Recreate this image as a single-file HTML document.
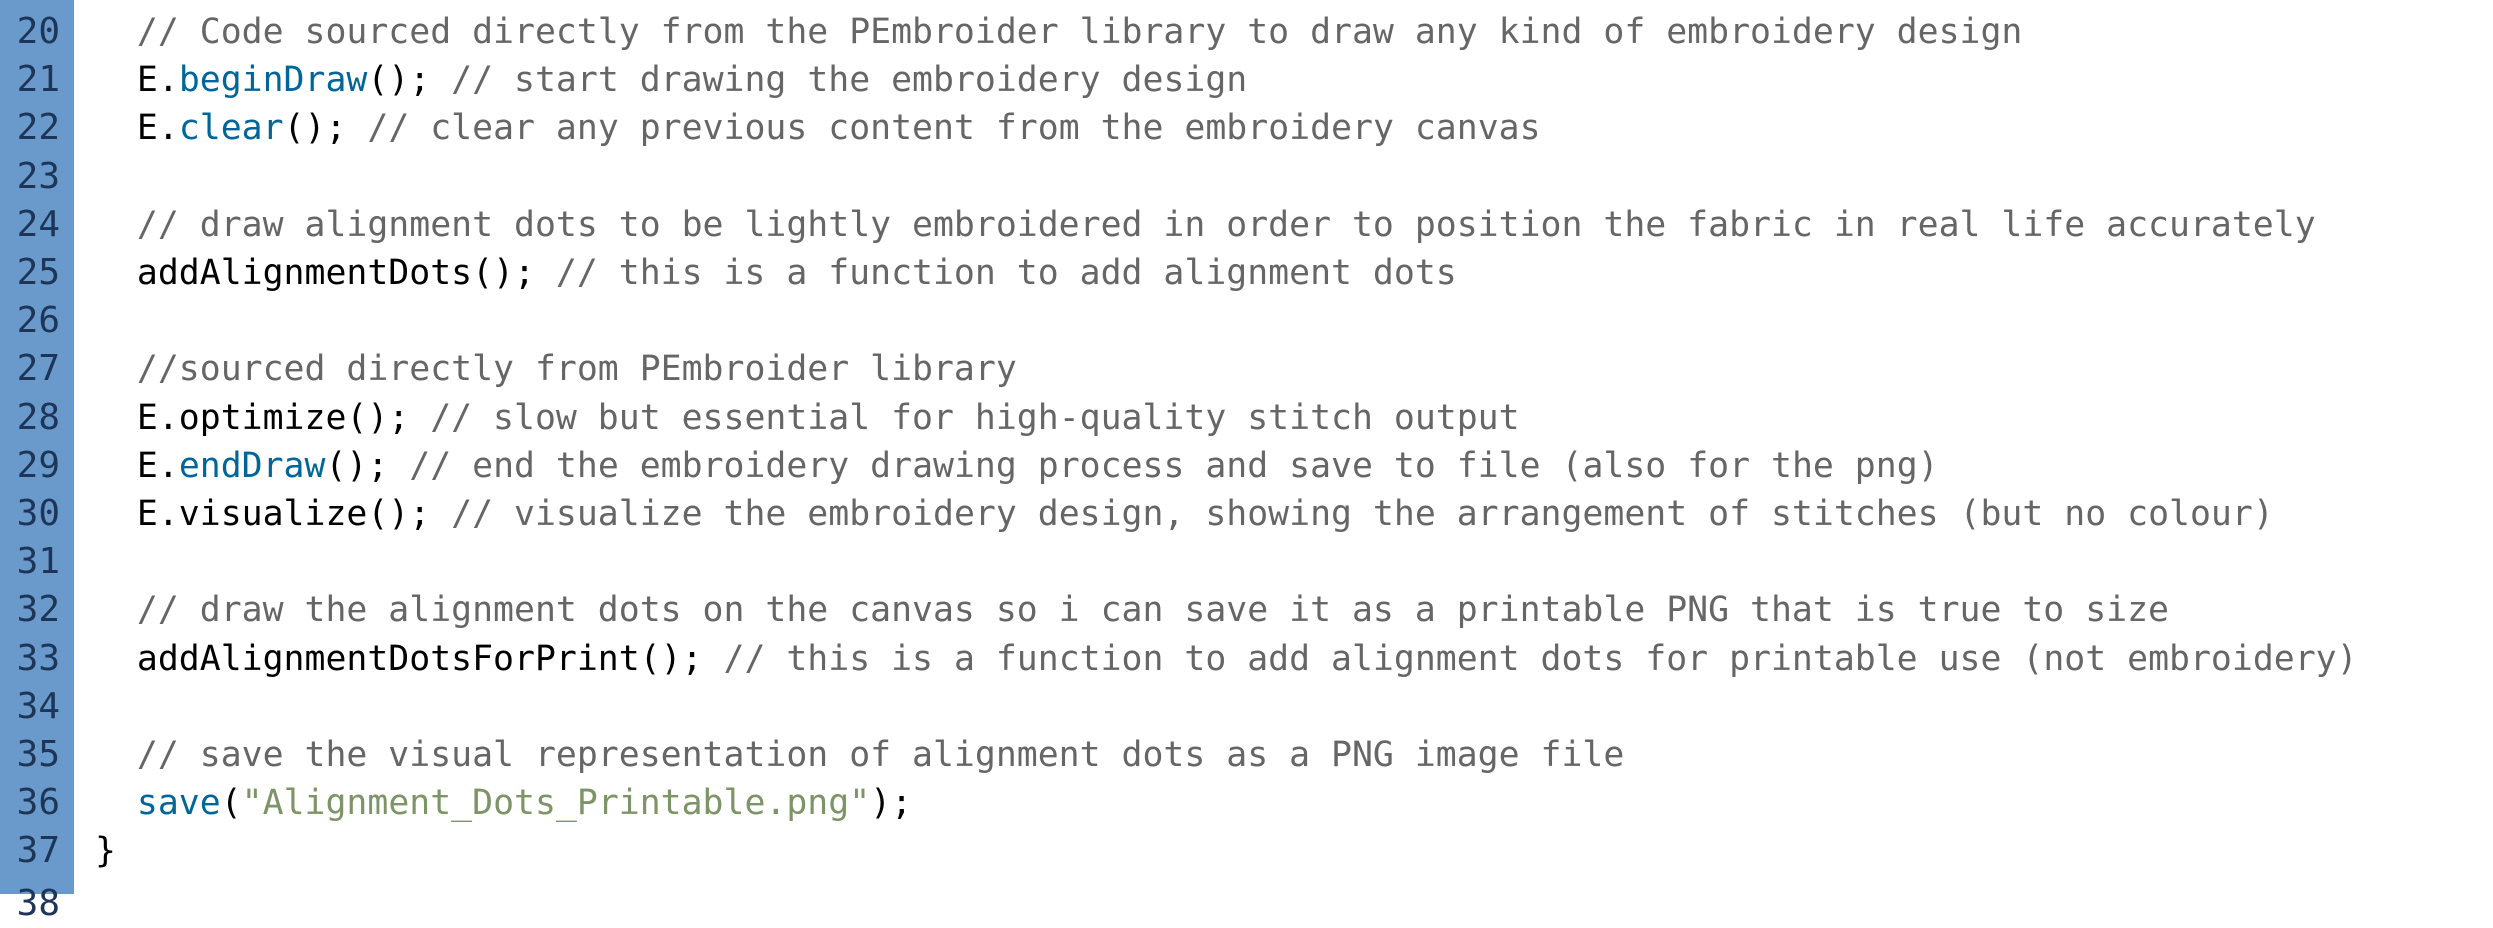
<!DOCTYPE html>
<html><head><style>
html,body{margin:0;padding:0;width:2493px;height:894px;overflow:hidden;background:#fff;}
.g{position:absolute;left:0;top:0;width:74px;height:894px;background:#6a9acb;}
.l{position:absolute;left:0;height:48.2px;line-height:48.2px;font-family:"DejaVu Sans Mono","Liberation Mono",monospace;font-size:34.8px;white-space:pre;color:#000;}
.n{position:absolute;left:0;width:60px;text-align:right;color:#1d3557;font-size:36px;}
.t{position:absolute;left:95px;}
.c{color:#666;}
.f{color:#006699;}
.s{color:#7d9467;}
</style></head><body>
<div class="g"></div>
<div class="l" style="top:8px"><span class="n">20</span><span class="t">  <span class="c">// Code sourced directly from the PEmbroider library to draw any kind of embroidery design</span></span></div>
<div class="l" style="top:56.2px"><span class="n">21</span><span class="t">  E.<span class="f">beginDraw</span>(); <span class="c">// start drawing the embroidery design</span></span></div>
<div class="l" style="top:104.4px"><span class="n">22</span><span class="t">  E.<span class="f">clear</span>(); <span class="c">// clear any previous content from the embroidery canvas</span></span></div>
<div class="l" style="top:152.6px"><span class="n">23</span></div>
<div class="l" style="top:200.8px"><span class="n">24</span><span class="t">  <span class="c">// draw alignment dots to be lightly embroidered in order to position the fabric in real life accurately</span></span></div>
<div class="l" style="top:249px"><span class="n">25</span><span class="t">  addAlignmentDots(); <span class="c">// this is a function to add alignment dots</span></span></div>
<div class="l" style="top:297.2px"><span class="n">26</span></div>
<div class="l" style="top:345.4px"><span class="n">27</span><span class="t">  <span class="c">//sourced directly from PEmbroider library</span></span></div>
<div class="l" style="top:393.6px"><span class="n">28</span><span class="t">  E.optimize(); <span class="c">// slow but essential for high-quality stitch output</span></span></div>
<div class="l" style="top:441.8px"><span class="n">29</span><span class="t">  E.<span class="f">endDraw</span>(); <span class="c">// end the embroidery drawing process and save to file (also for the png)</span></span></div>
<div class="l" style="top:490px"><span class="n">30</span><span class="t">  E.visualize(); <span class="c">// visualize the embroidery design, showing the arrangement of stitches (but no colour)</span></span></div>
<div class="l" style="top:538.2px"><span class="n">31</span></div>
<div class="l" style="top:586.4px"><span class="n">32</span><span class="t">  <span class="c">// draw the alignment dots on the canvas so i can save it as a printable PNG that is true to size</span></span></div>
<div class="l" style="top:634.6px"><span class="n">33</span><span class="t">  addAlignmentDotsForPrint(); <span class="c">// this is a function to add alignment dots for printable use (not embroidery)</span></span></div>
<div class="l" style="top:682.8px"><span class="n">34</span></div>
<div class="l" style="top:731px"><span class="n">35</span><span class="t">  <span class="c">// save the visual representation of alignment dots as a PNG image file</span></span></div>
<div class="l" style="top:779.2px"><span class="n">36</span><span class="t">  <span class="f">save</span>(<span class="s">"Alignment_Dots_Printable.png"</span>);</span></div>
<div class="l" style="top:827.4px"><span class="n">37</span><span class="t">}</span></div>
<div class="l" style="top:880px"><span class="n">38</span></div>
</body></html>
